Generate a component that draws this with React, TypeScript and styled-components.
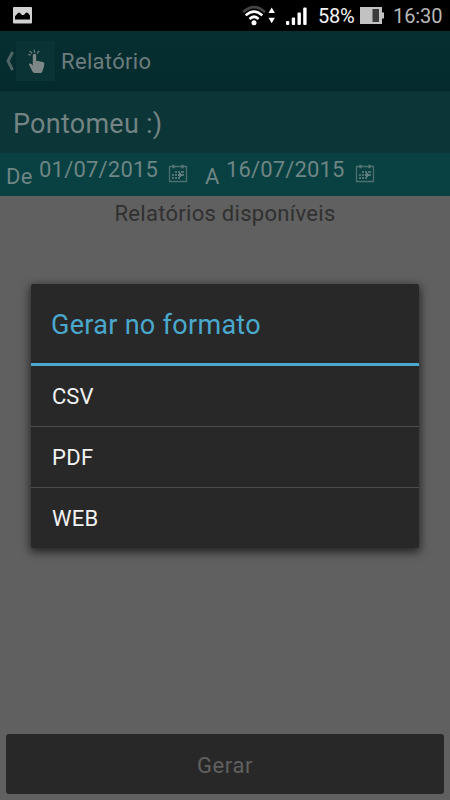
import React from "react";
import styled, { createGlobalStyle } from "styled-components";

const GlobalStyle = createGlobalStyle`
  * { box-sizing: border-box; }
  body { margin: 0; background: #606060; }
`;

const Screen = styled.div`
  position: relative;
  width: 450px;
  height: 800px;
  display: flex;
  flex-direction: column;
  overflow: hidden;
  background: #606060;
  font-family: Roboto, "Liberation Sans", sans-serif;
`;

const StatusBar = styled.header`
  height: 31px;
  flex: none;
  display: flex;
  align-items: center;
  padding: 0 8px 0 13px;
  background: #000;
`;

const StatusIcons = styled.div`
  margin-left: auto;
  display: flex;
  align-items: center;
  height: 31px;
`;

const Label = styled.span<{ $size: number; $color: string; $spacing?: number; $line?: number }>`
  display: block;
  white-space: nowrap;
  font-size: ${(p) => p.$size}px;
  line-height: ${(p) => p.$line ?? 30}px;
  letter-spacing: ${(p) => p.$spacing ?? 0}px;
  color: ${(p) => p.$color};
`;

const BatteryLevel = styled(Label)`
  margin-left: 11px;
  width: 37px;
`;

const Clock = styled(Label)`
  margin-left: 9px;
  width: 49px;
`;

const ActionBar = styled.nav`
  height: 60px;
  flex: none;
  display: flex;
  align-items: center;
  padding-left: 5px;
  background: linear-gradient(#062f32, #042a2d);
`;

const AppIcon = styled.div`
  width: 39px;
  height: 40px;
  margin: 0 6px 0 2px;
  background: #093335;
`;

const Profile = styled.section`
  height: 62px;
  flex: none;
  padding: 17px 0 0 13px;
  background: #0b3536;
  border-top: 1px solid #0a3032;
`;

const DateRow = styled.section`
  height: 43px;
  flex: none;
  display: flex;
  align-items: flex-start;
  padding: 2px 0 0 6px;
  background: #094041;
`;

const Prefix = styled(Label)<{ $width: number }>`
  width: ${(p) => p.$width}px;
  padding-top: 7px;
`;

const DateValue = styled(Label)`
  width: 129px;
`;

const CalendarIcon = styled.svg`
  width: 20px;
  height: 20px;
  margin: 8px 17px 0 0;
  flex: none;
`;

const Content = styled.main`
  flex: 1;
  display: flex;
  justify-content: center;
  padding-top: 3px;
`;

const GenerateButton = styled.button`
  height: 60px;
  flex: none;
  margin: 0 6px 6px;
  padding: 3px 0 0;
  border: 0;
  border-radius: 3px;
  background: #282828;
  font-family: inherit;
`;

const Overlay = styled.div`
  position: absolute;
  inset: 31px 0 0;
  display: flex;
  align-items: flex-start;
  justify-content: center;
  padding-top: 253px;
`;

const Dialog = styled.div`
  width: 388px;
  height: 264px;
  border-radius: 2px;
  background: #282828;
  box-shadow: 0 3px 10px 1px rgba(0, 0, 0, 0.65);
`;

const DialogTitle = styled.div`
  height: 82px;
  padding: 26px 0 0 20px;
  border-bottom: 3px solid #4aa8cd;
`;

const Option = styled.div`
  height: 61px;
  padding: 16px 0 0 21px;
  border-bottom: 1px solid #4c4c4c;
  &:last-child { border-bottom: 0; }
`;

const PageTitle = styled(Label)`
  padding-top: 2px;
`;

const PictureGlyph = () => (
  <svg width="19" height="17" viewBox="0 0 19 17">
    <rect width="19" height="16.5" rx="1" fill="#d2d2d2" />
    <path d="M2 12.5V9.3L5 6Q6 5 7 6l2 2h2l1.6-2Q14 4.8 15.2 6.2L17 8.5v4z" fill="#000" />
  </svg>
);

const WifiGlyph = () => (
  <svg width="34" height="22" viewBox="0 0 34 22" fill="none">
    <path d="M1.2 7Q12 -2.8 23 7" stroke="#454545" strokeWidth="2.6" />
    <path d="M3.7 10.4Q12 2.7 20.3 10.4M7.5 14Q12 9.5 16.6 14" stroke="#fff" strokeWidth="2.6" />
    <circle cx="12" cy="17.8" r="2.5" fill="#fff" />
    <path d="M29.7 2.5l3.2 5.5h-6.4zM29.7 18.2l3.2-5.5h-6.4z" fill="#fff" />
  </svg>
);

const SignalGlyph = styled.svg`
  margin: 2px 0 0 10px;
`;

const BatteryGlyph = styled.svg`
  margin-left: 5px;
`;

const TouchGlyph = () => (
  <svg width="39" height="40" viewBox="0 0 39 40">
    <path
      d="M16.8 14.5q0-1.8 1.7-1.8t1.7 1.8V20l1 .2q1-1 2.3 0l.8.5q1.3-.7 2.4.4 1.6 0 1.6 1.5 0 3-1.5 6.5-.5 3-1.8 3h-6.2q-1.8 0-2.6-2l-2.5-5q-1.4-1.9-.2-2.5 1-.4 2.1.7l1.2 1.3z"
      fill="#7d8788"
    />
    <path d="M18.4 8.7v3M13.7 9.8l2.3 2.7M23.2 9.8l-2.3 2.7M12.2 13.3l2.6.9" stroke="#697879" strokeWidth="1.3" />
  </svg>
);

const Calendar = () => (
  <CalendarIcon viewBox="0 0 20 20">
    <path d="M1.5 3.5h17v15h-17z" fill="none" stroke="#4d6f6f" strokeWidth="1.3" />
    <path d="M5.5 1.8v3.4M14.5 1.8v3.4" stroke="#557575" strokeWidth="2.4" />
    <path
      d="M7 9h2M10 9h2M13 9h3M4 12h2M7 12h2M14 12h2M4 15h2M7 15h2M10 15h2"
      stroke="#527272"
      strokeWidth="2"
    />
    <path d="M12 10v4M10 12h4" stroke="#648080" strokeWidth="2" />
  </CalendarIcon>
);

export default function App() {
  return (
    <>
      <GlobalStyle />
      <Screen>
        <StatusBar>
          <PictureGlyph />
          <StatusIcons>
            <WifiGlyph />
            <SignalGlyph width="21" height="19" viewBox="0 0 21 19" fill="#fff">
              <rect y="14" width="3.2" height="4" rx="1" />
              <rect x="5.8" y="10.5" width="3.3" height="7.5" rx="1" />
              <rect x="11.5" y="5.5" width="3.4" height="12.5" rx="1" />
              <rect x="17.2" y="0.5" width="3.4" height="17.5" rx="1" />
            </SignalGlyph>
            <BatteryLevel $size={20} $color="#f4f4f4" $spacing={-0.2}>58%</BatteryLevel>
            <BatteryGlyph width="24" height="17" viewBox="0 0 24 17">
              <path d="M0 0h22v5.5h2v6h-2V17H0z" fill="#c2c2c2" />
              <path d="M12.5 2h6.5v13h-6.5z" fill="#3c3c3c" />
            </BatteryGlyph>
            <Clock $size={20} $color="#b8b8b8" $spacing={-0.1}>16:30</Clock>
          </StatusIcons>
        </StatusBar>
        <ActionBar>
          <svg width="9" height="20" viewBox="0 0 9 20">
            <path d="M7.6 1L3 10l4.6 9" fill="none" stroke="#506465" strokeWidth="3" />
          </svg>
          <AppIcon><TouchGlyph /></AppIcon>
          <PageTitle $size={22} $color="#6e7c7d" $spacing={0.33}>Relatório</PageTitle>
        </ActionBar>
        <Profile>
          <Label $size={27} $color="#748383" $spacing={0.25}>Pontomeu :)</Label>
        </Profile>
        <DateRow>
          <Prefix $width={33} $size={22} $color="#6e8585" $spacing={0.2}>De</Prefix>
          <DateValue $size={22} $color="#6e8585" $spacing={0.2}>01/07/2015</DateValue>
          <Calendar />
          <Prefix $width={21} $size={22} $color="#6e8585">A</Prefix>
          <DateValue $size={22} $color="#6e8585" $spacing={0.15}>16/07/2015</DateValue>
          <Calendar />
        </DateRow>
        <Content>
          <Label $size={22} $color="#303030" $spacing={0.29}>Relatórios disponíveis</Label>
        </Content>
        <GenerateButton>
          <Label $size={22} $color="#606060" $spacing={0.6}>Gerar</Label>
        </GenerateButton>
        <Overlay>
          <Dialog>
            <DialogTitle>
              <Label $size={27} $color="#4aa8cd" $spacing={0.3}>Gerar no formato</Label>
            </DialogTitle>
            <Option><Label $size={22} $color="#f2f2f2">CSV</Label></Option>
            <Option><Label $size={22} $color="#f2f2f2" $spacing={0.3}>PDF</Label></Option>
            <Option><Label $size={22} $color="#f2f2f2" $spacing={0.2}>WEB</Label></Option>
          </Dialog>
        </Overlay>
      </Screen>
    </>
  );
}
